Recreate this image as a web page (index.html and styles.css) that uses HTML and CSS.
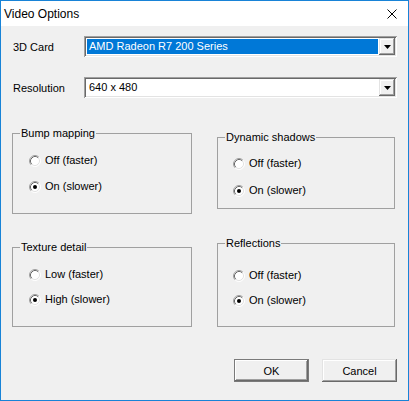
FILE: index.html
```html
<!DOCTYPE html>
<html>
<head>
<meta charset="utf-8">
<title>Video Options</title>
<link rel="stylesheet" href="styles.css">
</head>
<body>
<svg class="defs" width="0" height="0" aria-hidden="true">
  <defs>
    <symbol id="radio" viewBox="0 0 12 12">
      <circle cx="6" cy="6" r="5" fill="#fff"/>
      <path d="M2.11 9.89 A5.5 5.5 0 0 1 9.89 2.11" fill="none" stroke="#a0a0a0" stroke-width="1"/>
      <path d="M9.89 2.11 A5.5 5.5 0 0 1 2.11 9.89" fill="none" stroke="#ffffff" stroke-width="1"/>
      <path d="M2.82 9.18 A4.5 4.5 0 0 1 9.18 2.82" fill="none" stroke="#696969" stroke-width="1"/>
      <path d="M9.18 2.82 A4.5 4.5 0 0 1 2.82 9.18" fill="none" stroke="#e3e3e3" stroke-width="1"/>
    </symbol>
    <symbol id="radio-on" viewBox="0 0 12 12">
      <use href="#radio"/>
      <circle cx="6" cy="6" r="2" fill="#000"/>
    </symbol>
    <symbol id="arrow" viewBox="0 0 7 4">
      <path d="M0 0 H7 L3.5 4 Z" fill="#000"/>
    </symbol>
  </defs>
</svg>
<div class="window">
  <div class="titlebar">
    <span class="title">Video Options</span>
    <svg class="close" viewBox="0 0 10 10"><path d="M0.5 0.5 L9.5 9.5 M9.5 0.5 L0.5 9.5" stroke="#000" stroke-width="1" fill="none"/></svg>
  </div>
  <div class="client">
    <div class="field">
      <span class="field-label">3D Card</span>
      <div class="combo">
        <div class="combo-value selected">AMD Radeon R7 200 Series</div>
        <div class="combo-btn"><svg class="arrow"><use href="#arrow"/></svg></div>
      </div>
    </div>
    <div class="field field-second">
      <span class="field-label">Resolution</span>
      <div class="combo">
        <div class="combo-value">640 x 480</div>
        <div class="combo-btn"><svg class="arrow"><use href="#arrow"/></svg></div>
      </div>
    </div>
    <div class="groups">
      <div class="col">
        <div class="group g-bump">
          <div class="group-title">Bump mapping</div>
          <div class="options">
            <div class="option"><svg class="radio"><use href="#radio"/></svg><span>Off (faster)</span></div>
            <div class="option"><svg class="radio"><use href="#radio-on"/></svg><span>On (slower)</span></div>
          </div>
        </div>
        <div class="group g-texture">
          <div class="group-title">Texture detail</div>
          <div class="options">
            <div class="option"><svg class="radio"><use href="#radio"/></svg><span>Low (faster)</span></div>
            <div class="option"><svg class="radio"><use href="#radio-on"/></svg><span>High (slower)</span></div>
          </div>
        </div>
      </div>
      <div class="col col-right">
        <div class="group g-dynamic">
          <div class="group-title">Dynamic shadows</div>
          <div class="options">
            <div class="option"><svg class="radio"><use href="#radio"/></svg><span>Off (faster)</span></div>
            <div class="option"><svg class="radio"><use href="#radio-on"/></svg><span>On (slower)</span></div>
          </div>
        </div>
        <div class="group g-reflect">
          <div class="group-title">Reflections</div>
          <div class="options">
            <div class="option"><svg class="radio"><use href="#radio"/></svg><span>Off (faster)</span></div>
            <div class="option"><svg class="radio"><use href="#radio-on"/></svg><span>On (slower)</span></div>
          </div>
        </div>
      </div>
    </div>
    <div class="buttons">
      <button class="btn btn-default">OK</button>
      <button class="btn">Cancel</button>
    </div>
  </div>
</div>
</body>
</html>
```
FILE: styles.css
```css
* { box-sizing: border-box; }
html, body { margin: 0; padding: 0; }
body {
  font-family: "Liberation Sans", Arial, sans-serif;
  font-size: 11px;
  color: #000;
  background: #fff;
}
.defs { position: absolute; width: 0; height: 0; overflow: hidden; }

.window {
  width: 409px;
  height: 401px;
  border: 1px solid #1883d7;
  display: flex;
  flex-direction: column;
  background: #f0f0f0;
}
.titlebar {
  flex: none;
  height: 25px;
  background: #fff;
  display: flex;
  align-items: center;
  padding-left: 3px;
}
.title {
  flex: 1;
  font-size: 12px;
  line-height: 25px;
  padding-top: 1px;
}
.close {
  width: 10px;
  height: 10px;
  margin-right: 11px;
  margin-top: 1px;
}

.client {
  flex: 1;
  padding: 10px 11px 0 11px;
  display: flex;
  flex-direction: column;
}
.field {
  display: flex;
  align-items: center;
  height: 21px;
}
.field-second { margin-top: 20px; }
.field-label {
  width: 72px;
  padding-left: 1px;
}
.combo {
  width: 313px;
  height: 21px;
  background: #fff;
  padding: 2px;
  display: flex;
  box-shadow: inset 1px 1px #a0a0a0, inset -1px -1px #fff, inset 2px 2px #696969, inset -2px -2px #e3e3e3;
}
.combo-value {
  flex: 1;
  margin: 1px 1px 1px 1px;
  padding-left: 2px;
  line-height: 15px;
  white-space: nowrap;
}
.combo-value.selected {
  background: #0078d7;
  color: #fff;
}
.combo-btn {
  width: 16px;
  height: 17px;
  background: #f0f0f0;
  display: flex;
  align-items: center;
  justify-content: center;
  box-shadow: inset -1px -1px #696969, inset 1px 1px #e3e3e3, inset -2px -2px #a0a0a0, inset 2px 2px #fff;
}
.arrow { width: 7px; height: 4px; display: block; }

.groups {
  margin-top: 35px;
  display: grid;
  grid-template-columns: 180px 178px;
  column-gap: 25px;
  align-items: start;
}
.col { display: flex; flex-direction: column; }
.col-right { padding-top: 4px; }
.group {
  border: 1px solid #a0a0a0;
}
.group-title {
  width: fit-content;
  margin: -7px 0 0 7px;
  padding: 0 1px;
  line-height: 13px;
  background: #f0f0f0;
}
.options {
  display: flex;
  flex-direction: column;
  gap: 13px;
  padding-left: 16px;
}
.option {
  display: flex;
  align-items: center;
  gap: 4px;
  height: 13px;
  line-height: 13px;
}
.radio { width: 12px; height: 12px; display: block; flex: none; }

.g-bump { height: 81px; }
.g-bump .options { padding-top: 14px; }
.g-texture { height: 80px; margin-top: 33px; }
.g-texture .options { padding-top: 14px; gap: 12px; }
.g-dynamic { height: 72px; }
.g-dynamic .options { padding-top: 13px; gap: 14px; }
.g-dynamic .options, .g-reflect .options { padding-left: 15px; }
.g-reflect { height: 84px; margin-top: 34px; }
.g-reflect .options { padding-top: 19px; gap: 12px; }

.buttons {
  margin-top: 32px;
  display: flex;
  justify-content: flex-end;
  gap: 13px;
}
.btn {
  width: 75px;
  height: 23px;
  padding: 0;
  border: none;
  background: #f0f0f0;
  font-family: "Liberation Sans", Arial, sans-serif;
  font-size: 11px;
  color: #000;
  box-shadow: inset -1px -1px #696969, inset 1px 1px #e3e3e3, inset -2px -2px #a0a0a0, inset 2px 2px #fff;
}
.btn-default {
  box-shadow: inset 0 0 0 1px #7a7a7a, inset -2px -2px #696969, inset 2px 2px #fff, inset -3px -3px #a0a0a0;
}
```
